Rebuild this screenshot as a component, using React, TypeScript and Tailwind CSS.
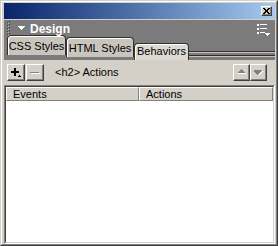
import React from "react";

function Raised({ className = "", children }: { className?: string; children?: React.ReactNode }) {
  return (
    <div className={"border border-t-white border-l-white border-r-[#404040] border-b-[#404040] bg-[#d4d0c8] shadow-[inset_-1px_-1px_0_#808080] flex items-center justify-center " + className}>
      {children}
    </div>
  );
}

function Grip() {
  const dots = [];
  for (let i = 0; i < 5; i++) {
    dots.push(<rect key={"d" + i} x={1} y={1 + i * 3} width={1} height={1} fill="#3a3a3a" />);
    dots.push(<rect key={"l" + i} x={2} y={2 + i * 3} width={1} height={1} fill="#b8b8b8" />);
    dots.push(<rect key={"e" + i} x={3} y={i * 3} width={1} height={1} fill="#3a3a3a" />);
  }
  return (
    <svg width="5" height="15" viewBox="0 0 5 15" shapeRendering="crispEdges">
      {dots}
    </svg>
  );
}

export default function App() {
  const font = { fontFamily: '"Liberation Sans", Arial, sans-serif' };
  return (
    <div style={font} className="w-[278px] h-[246px] bg-[#d4d0c8] border border-t-[#d4d0c8] border-l-[#d4d0c8] border-r-[#404040] border-b-[#404040] flex flex-col">
      <div className="flex-1 flex flex-col border border-t-white border-l-white border-r-[#808080] border-b-[#808080] pt-px pl-[2px] pr-px min-h-0">
        {/* Title bar */}
        <div className="h-[16px] shrink-0 bg-gradient-to-r from-[#0a246a] to-[#a6caf0] flex items-center justify-end pr-[3px]">
          <Raised className="w-[11px] h-[10px]">
            <svg width="7" height="6" viewBox="0 0 7 6" shapeRendering="crispEdges">
              <path d="M0 0h2v1h-2zM5 0h2v1h-2zM1 1h2v1h-2zM4 1h2v1h-2zM2 2h3v1h-3zM2 3h3v1h-3zM1 4h2v1h-2zM4 4h2v1h-2zM0 5h2v1h-2zM5 5h2v1h-2z" fill="#000" />
            </svg>
          </Raised>
        </div>
        {/* Dark panel header */}
        <div className="mt-px bg-[#7b7b7b] shrink-0 flex flex-col">
          <div className="h-[14px] flex items-center relative">
            <div className="ml-[2px] mt-[2px]">
              <Grip />
            </div>
            <svg className="ml-[7px] mt-[2px]" width="7" height="4" viewBox="0 0 7 4" shapeRendering="crispEdges">
              <path d="M0 0h7v1h-1v1h-1v1h-1v1h-1v-1h-1v-1h-1v-1h-1z" fill="#fff" />
            </svg>
            <span className="ml-[5px] mt-[4px] text-white font-bold text-[12px] leading-none">Design</span>
            <div className="ml-auto mr-[5px] mt-[6px]">
              <svg width="13" height="12" viewBox="0 0 13 12" shapeRendering="crispEdges">
                <rect x="0" y="0" width="2" height="2" fill="#fff" />
                <rect x="3" y="0" width="7" height="1" fill="#fff" />
                <rect x="0" y="4" width="2" height="2" fill="#fff" />
                <rect x="3" y="4" width="7" height="1" fill="#fff" />
                <rect x="0" y="8" width="2" height="2" fill="#fff" />
                <rect x="3" y="8" width="5" height="1" fill="#fff" />
                <path d="M8 9h5v1h-1v1h-1v1h-1v-1h-1v-1h-1z" fill="#fff" />
              </svg>
            </div>
          </div>
          {/* Tabs */}
          <div className="h-[26px] flex items-end pl-[3px]">
            <div className="w-[59px] h-[20px] mb-[5px] rounded-t-[4px] border border-b-0 border-[#303030] bg-[#c9c5bd] shadow-[inset_1px_1px_0_#ffffff] flex items-center justify-center text-[11px] text-black pt-[2px]">
              CSS Styles
            </div>
            <div className="w-[68px] h-[20px] mb-[3px] rounded-t-[4px] border border-b-0 border-[#303030] bg-[#c9c5bd] shadow-[inset_1px_1px_0_#ffffff] flex items-center justify-center text-[11px] text-black pt-[2px]">
              HTML Styles
            </div>
            <div className="w-[55px] h-[17px] rounded-t-[4px] border border-b-0 border-[#303030] bg-[#dcd9d2] shadow-[inset_1px_1px_0_#ffffff] flex items-end justify-center text-[11px] text-black pb-[1px]">
              Behaviors
            </div>
            <div className="flex-1 h-[9px] flex flex-col">
              <div className="h-px bg-[#303030]" />
              <div className="h-px bg-[#c8c4bc]" />
              <div className="h-[2px] bg-[#7b7b7b]" />
              <div className="h-px bg-[#303030]" />
              <div className="h-px bg-[#c8c4bc]" />
              <div className="flex-1 bg-[#7b7b7b]" />
            </div>
          </div>
        </div>
        {/* Toolbar */}
        <div className="h-[25px] shrink-0 bg-[#d4d0c8] flex items-start pt-[4px] pl-[3px] pr-[8px]">
          <Raised className="w-[18px] h-[17px] relative">
            <svg width="16" height="15" viewBox="0 0 16 15" shapeRendering="crispEdges">
              <path d="M6 3h2v3h3v2h-3v3h-2v-3h-3v-2h3z" fill="#000" />
              <path d="M10 12h3v-1h-1v-1h-1v1h-1z" fill="#000" />
            </svg>
          </Raised>
          <Raised className="w-[18px] h-[17px] ml-px">
            <svg width="16" height="15" viewBox="0 0 16 15" shapeRendering="crispEdges">
              <rect x="3" y="7" width="9" height="1" fill="#808080" />
              <rect x="4" y="8" width="9" height="1" fill="#ffffff" />
            </svg>
          </Raised>
          <span className="ml-[11px] mt-[3px] text-[11px] text-black leading-none">&lt;h2&gt; Actions</span>
          <Raised className="w-[17px] h-[17px] ml-auto">
            <svg width="15" height="15" viewBox="0 0 15 15" shapeRendering="crispEdges">
              <path d="M7 4h1v1h1v1h1v1h1v1h-7v-1h1v-1h1v-1h1z" fill="#808080" />
              <rect x="4" y="8" width="8" height="1" fill="#ffffff" />
            </svg>
          </Raised>
          <Raised className="w-[17px] h-[17px]">
            <svg width="15" height="15" viewBox="0 0 15 15" shapeRendering="crispEdges">
              <path d="M3 5h8v1h-1v1h-1v1h-1v1h-1v1h-1v-1h-1v-1h-1v-1h-1z" fill="#808080" />
              <path d="M7 10h1v-1h1v-1h1v-1h1v-1h1v1h-1v1h-1v1h-1v1h-1z" fill="#ffffff" />
            </svg>
          </Raised>
        </div>
        {/* Table */}
        <div className="flex-1 min-h-0 flex flex-col border border-t-[#808080] border-l-[#808080] border-r-white border-b-white">
          <div className="flex-1 flex flex-col border border-t-[#404040] border-l-[#404040] border-r-[#d4d0c8] border-b-[#d4d0c8] bg-white">
            <div className="h-[14px] shrink-0 flex text-[11px] text-black leading-none">
              <div className="w-[133px] border border-t-white border-l-white border-r-[#808080] border-b-[#808080] bg-[#d4d0c8] flex items-center pl-[6px]">Events</div>
              <div className="flex-1 border border-t-white border-l-white border-r-[#808080] border-b-[#808080] bg-[#d4d0c8] flex items-center pl-[6px]">Actions</div>
            </div>
            <div className="flex-1 bg-white" />
          </div>
        </div>
      </div>
    </div>
  );
}
